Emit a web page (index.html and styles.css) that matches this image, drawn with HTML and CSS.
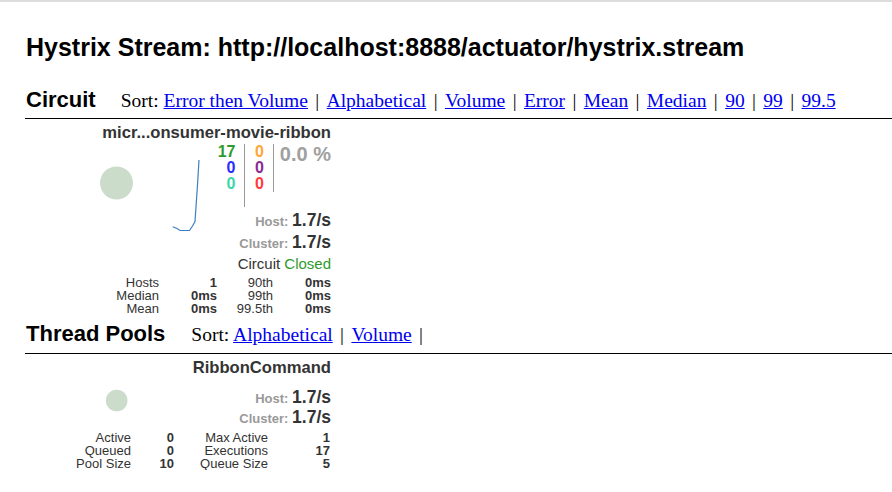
FILE: index.html
```html
<!DOCTYPE html>
<html>
<head>
<meta charset="utf-8">
<title>Hystrix Monitor</title>
<link rel="stylesheet" href="styles.css">
</head>
<body>
<div class="topbar"></div>
<div class="page">
  <h2 class="title">Hystrix Stream: http://localhost:8888/actuator/hystrix.stream</h2>

  <div class="section-head circuit-head">
    <h3 class="section-title">Circuit</h3>
    <div class="sort">Sort: <a href="#">Error then Volume</a><span class="sep">|</span><a href="#">Alphabetical</a><span class="sep">|</span><a href="#">Volume</a><span class="sep">|</span><a href="#">Error</a><span class="sep">|</span><a href="#">Mean</a><span class="sep">|</span><a href="#">Median</a><span class="sep">|</span><a href="#">90</a><span class="sep">|</span><a href="#">99</a><span class="sep">|</span><a href="#">99.5</a></div>
  </div>

  <div class="monitor circuit">
    <svg class="chart" width="305" height="200" viewBox="26 119 305 200">
      <circle cx="116.5" cy="183" r="16.5" fill="#cbdccb"/>
      <path d="M172.7 226.7 L177 228.5 L180 230.5 L189.5 230.5 L192.5 226 L195 221.5 L197.5 185 L199 160" fill="none" stroke="#3f7fbf" stroke-width="1.2"/>
    </svg>
    <div class="name">micr...onsumer-movie-ribbon</div>
    <div class="counters">
      <div class="col col1">
        <div class="success">17</div>
        <div class="short">0</div>
        <div class="bad">0</div>
      </div>
      <div class="col col2">
        <div class="timeout">0</div>
        <div class="rejected">0</div>
        <div class="failure">0</div>
      </div>
      <div class="percent">0.0 %</div>
    </div>
    <div class="rate rate-host"><span class="rate-label">Host:</span> <span class="rate-value">1.7/s</span></div>
    <div class="rate"><span class="rate-label">Cluster:</span> <span class="rate-value">1.7/s</span></div>
    <div class="status">Circuit <span class="closed">Closed</span></div>
    <div class="stats stats-circuit">
      <span class="lbl">Hosts</span><span class="val">1</span><span class="lbl">90th</span><span class="val">0ms</span>
      <span class="lbl">Median</span><span class="val">0ms</span><span class="lbl">99th</span><span class="val">0ms</span>
      <span class="lbl">Mean</span><span class="val">0ms</span><span class="lbl">99.5th</span><span class="val">0ms</span>
    </div>
  </div>

  <div class="section-head thread-head">
    <h3 class="section-title">Thread Pools</h3>
    <div class="sort">Sort: <a href="#">Alphabetical</a><span class="sep">|</span><a href="#">Volume</a><span class="sep">|</span></div>
  </div>

  <div class="monitor pool">
    <svg class="chart" width="305" height="120" viewBox="26 354 305 120">
      <circle cx="116.7" cy="400.5" r="10.8" fill="#cbdccb"/>
    </svg>
    <div class="name">RibbonCommand</div>
    <div class="rate pool-rate pool-host"><span class="rate-label">Host:</span> <span class="rate-value">1.7/s</span></div>
    <div class="rate pool-rate"><span class="rate-label">Cluster:</span> <span class="rate-value">1.7/s</span></div>
    <div class="stats stats-pool">
      <span class="lbl">Active</span><span class="val">0</span><span class="lbl">Max Active</span><span class="val">1</span>
      <span class="lbl">Queued</span><span class="val">0</span><span class="lbl">Executions</span><span class="val">17</span>
      <span class="lbl">Pool Size</span><span class="val">10</span><span class="lbl">Queue Size</span><span class="val">5</span>
    </div>
  </div>
</div>
</body>
</html>
```

FILE: styles.css
```css
html, body {
  margin: 0;
  padding: 0;
  background: #fff;
}

body {
  font-family: "Liberation Sans", Arial, sans-serif;
  color: #000;
}

.topbar {
  height: 2px;
  background: #dcdcdc;
}

.page {
  padding: 0 0 0 25px;
}

.title {
  margin: 31px 0 0 1px;
  font-size: 25px;
  line-height: 29px;
  font-weight: bold;
}

.section-head {
  display: flex;
  align-items: baseline;
  border-bottom: 1px solid #000;
}

.circuit-head {
  margin-top: 25px;
  padding-bottom: 5px;
}

.thread-head {
  margin-top: 6px;
  padding-bottom: 6px;
}

.section-title {
  margin: 0 0 0 1px;
  font-size: 22px;
  line-height: 26px;
  font-weight: bold;
}

.sort {
  font-family: "Liberation Serif", "Times New Roman", serif;
  font-size: 19.5px;
  margin-left: 25px;
}

.thread-head .sort {
  margin-left: 26px;
}

.sort a {
  color: #0000ee;
  text-decoration: underline;
}

.sep {
  display: inline-block;
  margin: 0 7.4px;
}

.monitor {
  position: relative;
  width: 305px;
  margin-left: 1px;
  color: #333;
  text-align: right;
}

.chart {
  position: absolute;
  left: 0;
  top: 0;
}

.name {
  position: relative;
  font-size: 16.6px;
  font-weight: bold;
  line-height: 19px;
  padding-top: 4px;
}

.counters {
  position: relative;
  display: flex;
  justify-content: flex-end;
  align-items: flex-start;
  margin-top: 2px;
  font-weight: bold;
  font-size: 16px;
  line-height: 16px;
}

.col {
  text-align: right;
  border-right: 1px solid #999;
}

.col1 {
  min-height: 63px;
  padding-right: 8.5px;
}

.col2 {
  padding-left: 10px;
  padding-right: 9px;
  min-height: 47px;
}

.percent {
  padding-left: 6px;
  font-size: 20px;
  line-height: 20px;
  color: #a0a0a0;
}

.success { color: #2e9a2e; }
.short { color: #2c2cff; }
.bad { color: #3cd7a8; }
.timeout { color: #ffa634; }
.rejected { color: #8b2a91; }
.failure { color: #ff3a3a; }

.rate {
  position: relative;
  font-size: 13px;
  line-height: 22px;
}

.rate-host {
  margin-top: 4px;
}

.rate-label {
  line-height: 1;
  font-weight: bold;
  color: #999;
}

.rate-value {
  font-size: 17.5px;
  line-height: 1;
  font-weight: bold;
  color: #333;
}

.status {
  position: relative;
  font-size: 15px;
  line-height: 18px;
  color: #333;
}

.closed {
  color: #2e9a2e;
}

.stats {
  position: relative;
  display: grid;
  font-size: 13px;
  line-height: 13px;
  margin-top: 3px;
}

.stats-circuit {
  grid-template-columns: 133px 58px 56px 58px;
}

.stats-pool {
  grid-template-columns: 105px 43px 94px 62px;
  margin-top: 2px;
}

.lbl {
  color: #333;
}

.val {
  font-weight: bold;
  color: #333;
}

.pool-rate {
  line-height: 20px;
}

.pool-host {
  margin-top: 12px;
}
```
